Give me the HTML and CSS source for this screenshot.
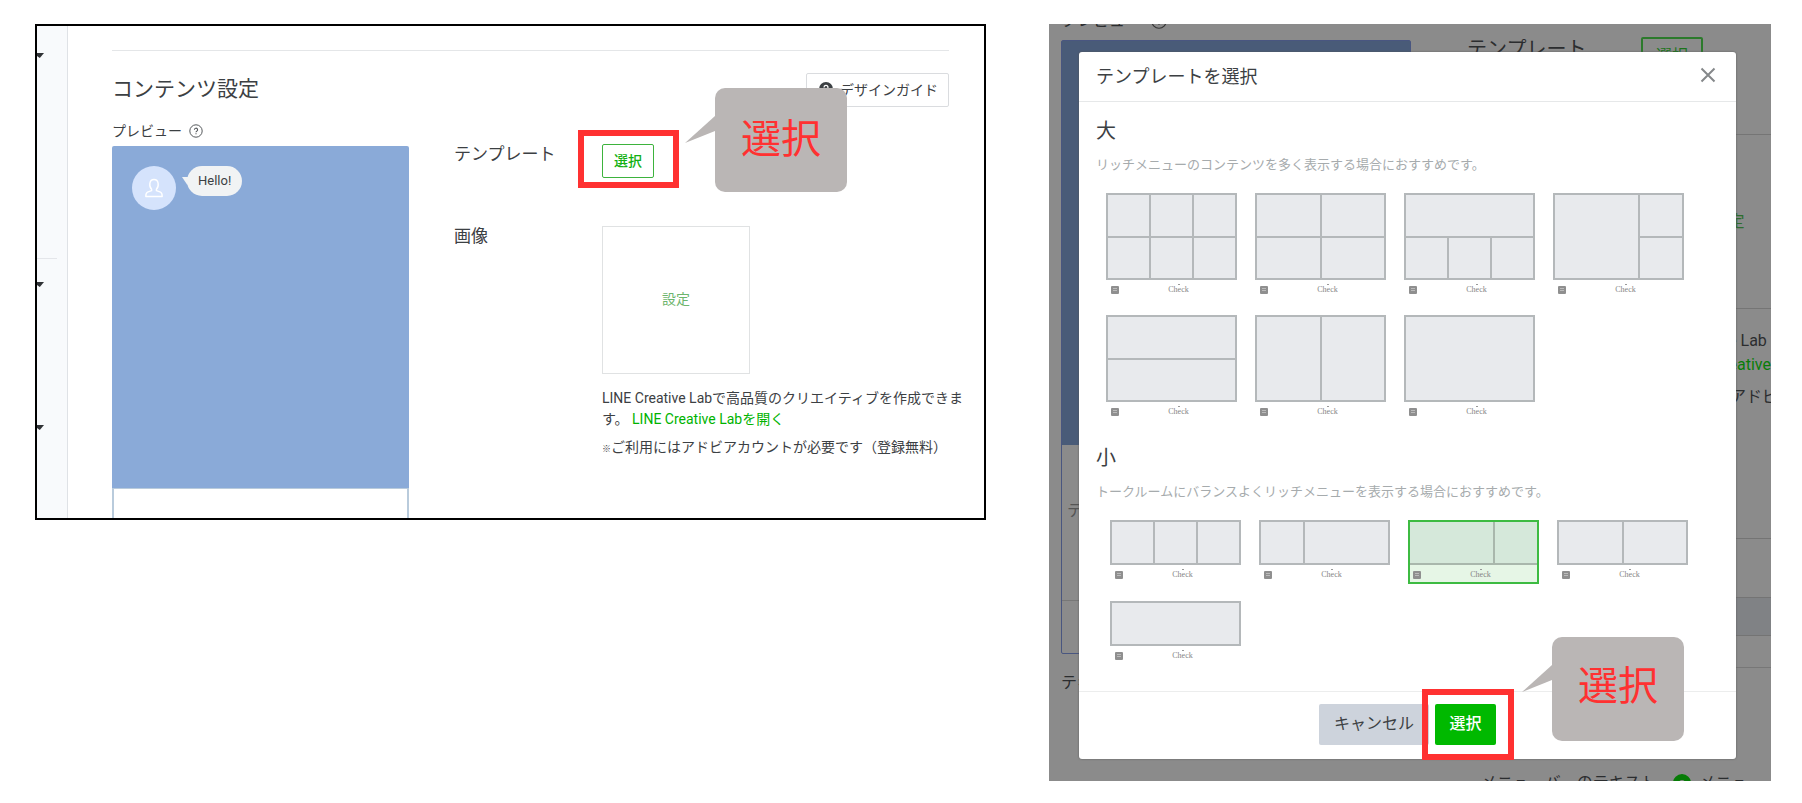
FILE: index.html
```html
<!DOCTYPE html>
<html lang="ja">
<head>
<meta charset="utf-8">
<title>リッチメニュー テンプレート選択</title>
<link rel="stylesheet" href="styles.css">
</head>
<body>
<main class="stage">

  <section class="editor">
    <aside class="sidebar">
      <i class="caret"></i>
      <hr class="sidebar-rule">
      <i class="caret"></i>
      <i class="caret"></i>
    </aside>
    <div class="content">
      <header class="content-head">
        <h1>コンテンツ設定</h1>
        <button class="guide" type="button">
          <svg width="14" height="14" viewBox="0 0 14 14"><circle cx="7" cy="7" r="7" fill="#3c4043"/><path d="M5 5.4a2 2 0 1 1 2.9 1.8c-.6.3-.9.6-.9 1.2M7 10v1" fill="none" stroke="#fff" stroke-width="1.3"/></svg>
          デザインガイド
        </button>
      </header>
      <div class="content-body">
        <div class="preview-col">
          <div class="preview-label">プレビュー
            <svg width="14" height="14" viewBox="0 0 14 14" fill="none" stroke="#55595c"><circle cx="7" cy="7" r="6.2"/><path d="M5.4 5.8a1.6 1.6 0 1 1 2.3 1.4c-.5.3-.7.5-.7 1M7 9.3v1" stroke-width="1.1"/></svg>
          </div>
          <div class="phone">
            <div class="chat">
              <span class="avatar">
                <svg width="20" height="20" viewBox="0 0 20 20" fill="none" stroke="#fff" stroke-width="1.4" stroke-linejoin="round"><path d="M7.600 11.300C4.800 8.500 5 1.500 10 1.500s5.200 7 2.400 9.800v1.400l4.100 1.500c1.200.5 1.700 1.600 1.700 4.300H1.800c0-2.700.5-3.800 1.700-4.300l4.100-1.500z"/></svg>
              </span>
              <span class="bubble">Hello!</span>
            </div>
            <div class="phone-foot"></div>
          </div>
        </div>
        <div class="form">
          <span class="form-label">テンプレート</span>
          <div>
            <div class="anchor">
              <button class="btn-outline" type="button">選択</button>
              <span class="mark"></span>
              <div class="callout">
                <svg class="tail" width="30" height="28" viewBox="0 0 30 28"><path d="M0 27 30 0v15z" fill="#bab6b5"/></svg>選択
              </div>
            </div>
          </div>
          <span class="form-label">画像</span>
          <div class="image-cell">
            <button class="image-box" type="button">設定</button>
            <p class="note">LINE Creative Labで高品質のクリエイティブを作成できます。 <a href="#lab">LINE Creative Labを開く</a></p>
            <p class="note note-last"><small>※</small>ご利用にはアドビアカウントが必要です（登録無料）</p>
          </div>
        </div>
      </div>
    </div>
  </section>

  <section class="dialog-view">
    <div class="under" aria-hidden="true">
      <div class="under-left">
        <div class="under-label">プレビュー
          <svg width="16" height="16" viewBox="0 0 14 14" fill="none" stroke="#333"><circle cx="7" cy="7" r="6.300"/><path d="M5.400 5.800a1.600 1.600 0 1 1 2.300 1.400c-.5.3-.7.5-.7 1M7 9.300v1"/></svg>
        </div>
        <div class="under-phone">
          <div class="under-blue"></div>
          <div class="under-text">テキスト</div>
          <div class="under-bar"></div>
        </div>
        <div class="under-caption">テキスト</div>
      </div>
      <div class="under-right">
        <div class="under-form">
          <span class="under-name">テンプレート</span>
          <span class="under-btn">選択</span>
          <span></span>
          <div class="under-image">
            <div class="under-box">設定</div>
            <p>LINE Creative Lab</p>
            <p>す。 <b>LINE Creative Lab</b></p>
            <p class="under-p3"><small>※</small>ご利用にはアドビアカウント</p>
          </div>
        </div>
        <div class="under-rows"><div></div><div></div><div></div></div>
        <div class="under-menu"><span>メニューバーのテキスト</span><i></i><span>メニュー</span></div>
      </div>
    </div>

    <div class="modal" role="dialog" aria-labelledby="modal-title">
      <header class="modal-head">
        <h2 id="modal-title">テンプレートを選択</h2>
        <button class="close" type="button" aria-label="閉じる">
          <svg width="16" height="16" viewBox="0 0 16 16"><path d="M1.500 1.500l13 13M14.500 1.500l-13 13" stroke="#85888a" stroke-width="2"/></svg>
        </button>
      </header>
      <div class="modal-body">
        <h3>大</h3>
        <p class="desc">リッチメニューのコンテンツを多く表示する場合におすすめです。</p>
        <div class="tiles tiles-large">
          <button class="tile" type="button"><span class="cells c6"><i></i><i></i><i></i><i></i><i></i><i></i></span><span class="bar">Check</span></button>
          <button class="tile" type="button"><span class="cells c4"><i></i><i></i><i></i><i></i></span><span class="bar">Check</span></button>
          <button class="tile" type="button"><span class="cells c1-3"><i></i><i></i><i></i><i></i></span><span class="bar">Check</span></button>
          <button class="tile" type="button"><span class="cells c1-2"><i></i><i></i><i></i></span><span class="bar">Check</span></button>
          <button class="tile" type="button"><span class="cells rows2"><i></i><i></i></span><span class="bar">Check</span></button>
          <button class="tile" type="button"><span class="cells cols2"><i></i><i></i></span><span class="bar">Check</span></button>
          <button class="tile" type="button"><span class="cells"><i></i></span><span class="bar">Check</span></button>
        </div>
        <h3 class="second">小</h3>
        <p class="desc">トークルームにバランスよくリッチメニューを表示する場合におすすめです。</p>
        <div class="tiles tiles-small">
          <button class="tile" type="button"><span class="cells cols3"><i></i><i></i><i></i></span><span class="bar">Check</span></button>
          <button class="tile" type="button"><span class="cells narrow-wide"><i></i><i></i></span><span class="bar">Check</span></button>
          <button class="tile selected" type="button" aria-pressed="true"><span class="cells wide-narrow"><i></i><i></i></span><span class="bar">Check</span></button>
          <button class="tile" type="button"><span class="cells cols2"><i></i><i></i></span><span class="bar">Check</span></button>
          <button class="tile" type="button"><span class="cells"><i></i></span><span class="bar">Check</span></button>
        </div>
      </div>
      <footer class="modal-foot">
        <button class="btn-cancel" type="button">キャンセル</button>
        <div class="anchor anchor-foot">
          <button class="btn-primary" type="button">選択</button>
          <span class="mark"></span>
          <div class="callout">
            <svg class="tail" width="30" height="28" viewBox="0 0 30 28"><path d="M0 27 30 0v15z" fill="#bab6b5"/></svg>選択
          </div>
        </div>
      </footer>
    </div>
  </section>

</main>
</body>
</html>
```
FILE: styles.css
```css
*, *::before, *::after { box-sizing: border-box; }
body {
  margin: 0;
  background: #fff;
  color: #3c4043;
  font-family: Roboto, "Noto Sans CJK JP", sans-serif;
  font-size: 14px;
}
h1, h2, h3, p { margin: 0; font-weight: 400; }
button { font: inherit; color: inherit; padding: 0; margin: 0; cursor: pointer; }
svg { display: block; }

.stage {
  display: grid;
  grid-template-columns: 951fr 722fr;
  gap: 63px;
  align-items: start;
  padding: 24px 31px 22px 35px;
}

/* Left: editor panel */
.editor { display: flex; border: 2px solid #000; }
.sidebar {
  width: 31px;
  flex: none;
  background: #f8fafc;
  border-right: 1px solid #dfe2e6;
  padding-top: 27px;
}
.caret {
  display: block;
  width: 7px;
  height: 5px;
  background: #2f3235;
  clip-path: polygon(0 0, 100% 0, 40% 100%, 0 60%);
}
.sidebar-rule { width: 20px; margin: 200px 0 23px; border: 0; border-top: 1px solid #e4e6ea; }
.caret + .caret { margin-top: 138px; }

.content { flex: 1; min-width: 0; padding: 24px 0 0 44px; }
.content-head {
  display: flex;
  justify-content: space-between;
  margin-right: 35px;
  padding-top: 22px;
  border-top: 1px solid #e4e6e8;
}
.content-head h1 { font-size: 21px; line-height: 32px; }
.guide {
  display: flex;
  align-items: center;
  gap: 7px;
  height: 34px;
  padding: 0 10px 3px 12px;
  background: #fff;
  border: 1px solid #dadcdf;
  border-radius: 2px;
}
.content-body {
  display: grid;
  grid-template-columns: 297px 1fr;
  gap: 45px;
  padding: 14px 18px 0 0;
}
.preview-label {
  display: flex;
  align-items: center;
  gap: 7px;
  line-height: 20px;
  margin-bottom: 5px;
}
.phone { border-radius: 2px 2px 0 0; overflow: hidden; }
.chat {
  display: flex;
  align-items: flex-start;
  gap: 11px;
  height: 342px;
  padding: 20px;
  background: #8aaad8;
}
.avatar {
  display: grid;
  place-items: center;
  width: 44px;
  height: 44px;
  border-radius: 50%;
  background: #d5e3fc;
}
.bubble {
  position: relative;
  padding: 0 11px;
  border-radius: 15px;
  background: #f1f3f4;
  font-size: 13px;
  line-height: 30px;
}
.bubble::before {
  content: "";
  position: absolute;
  left: -5px;
  top: 11px;
  width: 9px;
  height: 8px;
  background: #f1f3f4;
  clip-path: polygon(0 0, 100% 0, 60% 100%);
}
.phone-foot { height: 30px; border: solid #b9cbdc; border-width: 1px 2px 0; }

.form {
  display: grid;
  grid-template-columns: 148px 1fr;
  row-gap: 48px;
  align-content: start;
  padding-top: 23px;
}
.form-label { font-size: 17px; line-height: 20px; }
.anchor { position: relative; width: max-content; }
.btn-outline {
  display: block;
  width: 52px;
  height: 34px;
  padding-bottom: 2px;
  background: #fff;
  border: 1px solid #3db33d;
  border-radius: 2px;
  color: #13b013;
  font-weight: 500;
}
.mark {
  position: absolute;
  inset: -14px -25px -10px -24px;
  border: 6px solid #ff3131;
  pointer-events: none;
}
.callout {
  position: absolute;
  left: 113px;
  top: -56px;
  width: 132px;
  height: 104px;
  border-radius: 10px;
  background: #bab6b5;
  color: #ff3131;
  font-size: 40px;
  line-height: 104px;
  text-align: center;
}
.tail { position: absolute; right: 100%; top: 28px; }
.image-box {
  display: block;
  width: 148px;
  height: 148px;
  margin-bottom: 14px;
  padding-bottom: 4px;
  background: #fff;
  border: 1px solid #e0e2e3;
  color: #6db56d;
}
.note { line-height: 21px; }
.note a { color: #00b300; text-decoration: none; }
.note-last { margin-top: 7px; }
small { font-size: 9px; }

/* Right: dialog over a dimmed page */
.dialog-view { position: relative; padding: 28px 35px 22px 30px; background: #8b8b8b; }
.under {
  position: absolute;
  inset: 0;
  display: flex;
  gap: 56px;
  padding-left: 12px;
  overflow: hidden;
  color: #2b2d2f;
  font-size: 16px;
  line-height: 24px;
  white-space: nowrap;
}
.under-left { width: 350px; flex: none; }
.under-label { display: flex; align-items: center; gap: 10px; height: 16px; margin: -11px 0 11px; }
.under-phone { border: 1px solid #495680; border-radius: 2px; height: 614px; }
.under-blue { height: 404px; background: #495b78; }
.under-text { height: 156px; padding: 54px 5px 0; border-bottom: 1px solid #777; color: #555; }
.under-caption { padding-top: 17px; }
.under-right { flex: none; width: 430px; padding-top: 13px; }
.under-form { display: grid; grid-template-columns: 174px 1fr; row-gap: 54px; }
.under-name { font-size: 20px; line-height: 24px; }
.under-btn {
  width: 62px;
  height: 43px;
  border: 2px solid #2c7a2c;
  border-radius: 2px;
  color: #1b741b;
  line-height: 34px;
  text-align: center;
}
.under-box {
  width: 175px;
  height: 175px;
  margin-bottom: 20px;
  border: 1px solid #757575;
  color: #2e6d2e;
  line-height: 173px;
  text-align: center;
}
.under-p3 { margin-top: 8px; }
.under-image b { color: #087d08; font-weight: 400; }
.under-rows { margin-top: 127px; border-top: 1px solid #747474; }
.under-rows div:nth-child(1) { height: 58px; }
.under-rows div:nth-child(2) { height: 39px; background: #808285; border: solid #747474; border-width: 1px 0; }
.under-rows div:nth-child(3) { height: 32px; border-bottom: 1px solid #777; }
.under-menu { display: flex; align-items: center; height: 24px; margin-top: 103px; padding-left: 14px; }
.under-menu i { width: 18px; height: 18px; margin: 0 8px 0 17px; border: 6px solid #067c06; border-radius: 50%; background: #8b8b8b; }

.modal { position: relative; background: #fff; border-radius: 3px; box-shadow: 0 0 2px #555; }
.modal-head {
  display: flex;
  align-items: center;
  justify-content: space-between;
  height: 50px;
  padding: 0 20px 3px 17px;
  border-bottom: 1px solid #e6e8e9;
}
.modal-head h2 { font-size: 18px; }
.close { background: none; border: 0; }
.modal-body { padding: 14px 17px 26px; }
h3 { font-size: 20px; line-height: 30px; }
.second { margin-top: 23px; }
.desc { margin: 9px 0 18px; font-size: 13px; line-height: 20px; color: #a6abad; }
.tiles { display: grid; grid-template-columns: repeat(4, 1fr); gap: 17px 18px; }
.tiles-large { padding: 0 35px 0 10px; }
.tiles-small { padding: 0 31px 0 14px; }
.tile { display: block; border: 0; background: #fff; }
.cells { display: grid; gap: 2px; padding: 2px; height: 45px; background: #b4b8ba; }
.tiles-large .cells { height: 87px; }
.tiles-large .bar { height: 18px; }
.cells i { background: #e8eaed; }
.c6 { grid-template-columns: repeat(3, 1fr); }
.c4 { grid-template-columns: repeat(2, 1fr); }
.c1-3 { grid-template-columns: repeat(3, 1fr); }
.c1-3 i:first-child { grid-column: 1 / -1; }
.c1-2 { grid-template-columns: 2fr 1fr; }
.c1-2 i:first-child { grid-row: 1 / 3; }
.rows2 { grid-template-rows: 1fr 1fr; }
.cols2 { grid-template-columns: 1fr 1fr; }
.cols3 { grid-template-columns: repeat(3, 1fr); }
.narrow-wide { grid-template-columns: 1fr 2fr; }
.wide-narrow { grid-template-columns: 2fr 1fr; }
.bar {
  position: relative;
  display: block;
  height: 19px;
  padding-left: 14px;
  color: #858585;
  font: 8px/19px "Liberation Serif", serif;
  text-align: center;
}
.bar::before {
  content: "";
  position: absolute;
  left: 5px;
  top: 6px;
  width: 8px;
  height: 8px;
  border: 2px solid #8f8f8f;
  border-radius: 1px;
  background: linear-gradient(#bbb 1px, #8f8f8f 1px 2px, #bbb 2px 3px, #8f8f8f 3px);
}
.bar::after {
  content: "";
  position: absolute;
  left: 72px;
  top: 4px;
  width: 2px;
  height: 1px;
  background: #999;
}
.selected { background: #e6f6e6; outline: 2px solid #3dbb42; outline-offset: -2px; }
.selected .cells { background: #a9b7ac; }
.selected .cells i { background: #d5e8da; }

.modal-foot {
  display: flex;
  justify-content: center;
  gap: 6px;
  padding: 12px 0 14px;
  border-top: 1px solid #eceded;
  font-size: 16px;
}
.btn-cancel { height: 41px; padding: 0 15px 5px; border: 0; border-radius: 2px; background: #cdd3dc; }
.btn-primary {
  display: block;
  width: 61px;
  height: 41px;
  padding-bottom: 5px;
  border: 0;
  border-radius: 2px;
  background: #00b900;
  color: #fff;
  font-weight: 500;
}
.anchor-foot .mark { inset: -15px -18px -15px -13px; }
.anchor-foot .callout { left: 117px; top: -67px; line-height: 100px; }
```
